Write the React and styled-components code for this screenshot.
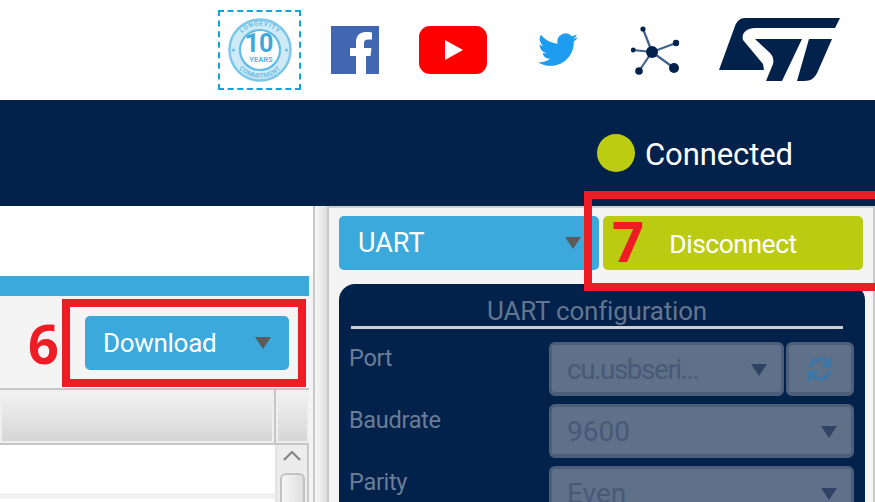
import React from "react";
import styled, { createGlobalStyle } from "styled-components";
import { FaSync } from "react-icons/fa";

const Global = createGlobalStyle`
  html, body { margin: 0; padding: 0; background: #fff; overflow: hidden; }
  * { box-sizing: border-box; }
`;
const Page = styled.div`
  position: relative; width: 875px; height: 502px; overflow: hidden;
  font-family: Roboto, "Liberation Sans", sans-serif; background: #fff;
`;
const TopBar = styled.header`
  height: 100px; display: flex; align-items: center; padding-left: 218px;
`;
const Badge = styled.div`
  width: 83px; height: 80px; border: 2px dashed #0ea5d8; display: flex; align-items: center; justify-content: center;
  margin-right: 30px; margin-top: -1px;
`;
const LogoSlot = styled.div`
  display: flex; margin-left: ${p => p.$ml}px; margin-top: ${p => p.$mt || 0}px;
`;
const StatusBar = styled.div`
  height: 106px; background: #02224c; display: flex; align-items: center; padding: 0 0 0 597px; gap: 10px; color: #fff;
`;
const Dot = styled.span`
  width: 38px; height: 38px; border-radius: 50%; background: #bccc10;
`;
const StatusText = styled.span`
  font-size: 31px; line-height: 38px; letter-spacing: -0.1px; margin-top: 3px;
`;
const Main = styled.div`
  display: flex; height: 296px; background: #f4f4f4;
`;
const LeftPane = styled.div`
  width: 313px; flex: none; display: flex; flex-direction: column;
`;
const WhiteBand = styled.div` height: 70px; background: #fff; `;
const BlueBand = styled.div` height: 20px; width: 309px; background: #3ba9dc; `;
const ActionRow = styled.div`
  height: 92px; display: flex; align-items: flex-start; justify-content: flex-end; padding: 20px 24px 0 0;
`;
const BlueButton = styled.div`
  background: #3ba9dc; border-radius: 5px; color: #fff; display: flex; align-items: center; justify-content: space-between;
  font-size: ${p => p.$fs}px; letter-spacing: ${p => p.$ls}px; font-weight: 400;
  width: ${p => p.$w}px; height: 54px;
  padding: 0 18px 0 ${p => p.$pl}px;
`;
const Caret = styled.span`
  width: 0; height: 0; border-left: 8.5px solid transparent; border-right: 8.5px solid transparent;
  border-top: 12px solid ${p => p.$c || "#5b5b5b"};
`;
const TableHeader = styled.div`
  display: flex; width: 309px; height: 57px; border-top: 2px solid #c6c6c6; border-bottom: 2px solid #c6c6c6;
  gap: 2px; background: #c6c6c6;
`;
const HeadCell = styled.div`
  height: 53px; border: 2px solid #efefef; background: linear-gradient(#f2f2f2, #d6d6d6);
  ${p => p.$grow ? "flex: 1;" : "width: 33px;"}
`;
const TableBody = styled.div`
  flex: 1; display: flex; width: 309px; background: #fff; min-height: 0;
`;
const Rows = styled.div` flex: 1; `;
const Row = styled.div`
  height: 54px; background: #fff; border-bottom: 6px solid #f1f1f1;
`;
const ScrollTrack = styled.div`
  width: 34px; background: #ececec; border-left: 2px solid #e4e4e4; border-right: 2px solid #cacaca; display: flex; flex-direction: column; align-items: center; padding-top: 6px;
`;
const Thumb = styled.div`
  width: 25px; flex: 1; margin-top: 12px; border: 2px solid #c2c2c2; border-bottom: none; border-radius: 6px 6px 0 0; background: linear-gradient(90deg,#f6f6f6,#dedede);
`;
const Splitter = styled.div`
  width: 16px; flex: none; background: linear-gradient(90deg,#c9c9c9 0 2px,#f8f8f8 2px,#dedede 14px,#c9c9c9 14px);
`;
const RightPane = styled.div`
  flex: 1; min-width: 0; background: #f4f4f4; border-top: 2px solid #d0d0d0; border-right: 2px solid #c9c9c9; padding: 8px 0 0 10px; display: flex; flex-direction: column; gap: 14px;
`;
const ButtonRow = styled.div` display: flex; gap: 4px; `;
const GreenButton = styled.div`
  width: 260px; height: 54px; background: #bbcb12; border-radius: 5px; color: #fff; font-size: 26.5px; letter-spacing: -0.5px;
  display: flex; align-items: center; justify-content: center;
`;
const ConfigPanel = styled.div`
  flex: 1; width: 526px; background: #02224c; border-radius: 16px 16px 0 0; padding: 12px 11px 0 11px; color: #63758f;
`;
const ConfigTitle = styled.div`
  margin: 0 0 0 1px; width: 492px; font-size: 26px; line-height: 30px; text-align: center; letter-spacing: -0.2px; border-bottom: 3px solid #cfcfd3; height: 33px;
`;
const FormRow = styled.div`
  display: flex; height: 54px; margin-top: ${p => p.$mt}px; gap: 2px; margin-left: -1px;
`;
const FieldLabel = styled.div`
  width: 198px; flex: none; font-size: 23.5px; line-height: 28px; padding-top: 2px; color: #6b7d96; letter-spacing: -0.3px;
`;
const Select = styled.div`
  flex: 1; height: 54px; background: #5f7089; border-radius: 6px; border: 3px solid #4c5e7a; border-bottom-width: 4px;
  display: flex; align-items: center; justify-content: space-between; padding: 2px 14px 0 15px;
  font-size: 28px; color: #465a78; letter-spacing: ${p => p.$tight ? "-1.5px" : "0"};
`;
const RefreshButton = styled.div`
  width: 68px; height: 54px; background: #5f7089; border-radius: 6px; border: 3px solid #4c5e7a; border-bottom-width: 4px;
  display: flex; align-items: center; justify-content: center; color: #3a76a8; font-size: 24px;
`;
const Annotation = styled.div`
  position: absolute; left: ${p => p.$x}px; top: ${p => p.$y}px; width: ${p => p.$w}px; height: ${p => p.$h}px;
  border: 8px solid #ee1c25; pointer-events: none;
`;
const Numeral = styled.div`
  position: absolute; left: ${p => p.$x}px; top: ${p => p.$y}px; color: #ee1c25;
  font: bold ${p => p.$fs}px/60px "Open Sans", "Liberation Sans", sans-serif;
`;

const TenYears = () => (
  <svg width="64" height="64" viewBox="0 0 64 64">
    <defs>
      <path id="arcTop" d="M7.500 32a24.500 24.500 0 0 1 49 0" />
      <path id="arcBottom" d="M4 32a28 28 0 0 0 56 0" />
    </defs>
    <circle cx="32" cy="32" r="30.500" fill="#cfeaf7" stroke="#7cc8ea" strokeWidth="2.500" />
    <circle cx="32" cy="32" r="20" fill="#fff" stroke="#62bce5" strokeWidth="2.200" />
    <text fontFamily="Roboto, sans-serif" fontWeight="700" fontSize="6.500" fill="#6cc0e6" letterSpacing="0.6" textAnchor="middle">
      <textPath href="#arcTop" startOffset="50%">LONGEVITY</textPath>
    </text>
    <text fontFamily="Roboto, sans-serif" fontWeight="700" fontSize="6.500" fill="#6cc0e6" letterSpacing="0.3" textAnchor="middle">
      <textPath href="#arcBottom" startOffset="50%">COMMITMENT</textPath>
    </text>
    <circle cx="5.500" cy="32" r="1.600" fill="#6cc0e6" />
    <circle cx="58.500" cy="32" r="1.600" fill="#6cc0e6" />
    <text x="31" y="34" textAnchor="middle" fontFamily="Roboto, sans-serif" fontWeight="700" fontSize="25" fill="#3ba9dc">10</text>
    <text x="33" y="44" textAnchor="middle" fontFamily="Roboto, sans-serif" fontWeight="700" fontSize="7.500" fill="#55b5e2">YEARS</text>
  </svg>
);
const Facebook = () => (
  <svg width="48" height="48" viewBox="0 0 48 48">
    <rect width="48" height="48" fill="#4267b2" />
    <path d="M25 48V30h-6v-8h6v-6c0-6.500 4-10 9.700-10 2.700 0 4.800.2 6.300.4v7h-3.800c-3 0-4.200 1.400-4.200 3.600v5h7.500l-1 8H35v18z" fill="#fff" />
  </svg>
);
const YouTube = () => (
  <svg width="68" height="48" viewBox="0 0 68 48">
    <rect width="68" height="48" rx="11" fill="#ff0000" />
    <path d="M26 14v20l18-10z" fill="#fff" />
  </svg>
);
const Twitter = () => (
  <svg width="40" height="34" viewBox="0 0 24 20">
    <path fill="#1e9cf0" d="M24 2.400a9.800 9.800 0 0 1-2.800.8A4.900 4.900 0 0 0 23.300.500a9.800 9.800 0 0 1-3.100 1.200 4.900 4.900 0 0 0-8.400 4.500A14 14 0 0 1 1.700.900a4.900 4.900 0 0 0 1.500 6.600 4.900 4.900 0 0 1-2.200-.6v.1a4.900 4.900 0 0 0 3.900 4.800 4.900 4.900 0 0 1-2.200.1 4.900 4.900 0 0 0 4.600 3.400A9.900 9.900 0 0 1 0 17.300 14 14 0 0 0 7.500 19.500c9.100 0 14-7.500 14-14v-.6A10 10 0 0 0 24 2.400z" />
  </svg>
);
const Network = () => (
  <svg width="50" height="50" viewBox="0 0 50 50">
    <g stroke="#3f618d" strokeWidth="2.200">
      <line x1="21" y1="26" x2="12" y2="3" /><line x1="21" y1="26" x2="45" y2="17" />
      <line x1="21" y1="26" x2="2" y2="24" /><line x1="21" y1="26" x2="8" y2="45" /><line x1="21" y1="26" x2="43" y2="42" />
    </g>
    <g fill="#02224c">
      <circle cx="21" cy="26" r="6" /><circle cx="12" cy="3" r="2.600" /><circle cx="45" cy="17" r="3.200" />
      <circle cx="2.300" cy="24" r="2.400" /><circle cx="8" cy="45" r="3.800" /><circle cx="43" cy="42" r="5" />
    </g>
  </svg>
);
const StLogo = () => (
  <svg width="122" height="64" viewBox="0 0 122 64">
    <path fill="#02224c" d="M26 0H121L116 10H36C28 10 22 15 24 22L44 46 45 52H0L16 8C18 3 21 0 26 0Z" />
    <path fill="#02224c" d="M36 21H83L63 63H47L54 46C55 42 54 38 51 35Z" />
    <path fill="#02224c" d="M90 21H113L99 53C96 60 92 63 85 63H78Z" />
  </svg>
);

export default function App() {
  return (
    <Page>
      <Global />
      <TopBar>
        <Badge><TenYears /></Badge>
        <LogoSlot $ml={0}><Facebook /></LogoSlot>
        <LogoSlot $ml={40}><YouTube /></LogoSlot>
        <LogoSlot $ml={51}><Twitter /></LogoSlot>
        <LogoSlot $ml={53} $mt={1}><Network /></LogoSlot>
        <LogoSlot $ml={38}><StLogo /></LogoSlot>
      </TopBar>
      <StatusBar>
        <Dot />
        <StatusText>Connected</StatusText>
      </StatusBar>
      <Main>
        <LeftPane>
          <WhiteBand />
          <BlueBand />
          <ActionRow>
            <BlueButton $w={204} $fs={26} $ls={-0.3} $pl={18}>Download<Caret /></BlueButton>
          </ActionRow>
          <TableHeader>
            <HeadCell $grow />
            <HeadCell />
          </TableHeader>
          <TableBody>
            <Rows><Row /></Rows>
            <ScrollTrack>
              <svg width="18" height="10" viewBox="0 0 18 10" fill="none" stroke="#858585" strokeWidth="2.200"><path d="M1 9L9 1l8 8" /></svg>
              <Thumb />
            </ScrollTrack>
          </TableBody>
        </LeftPane>
        <Splitter />
        <RightPane>
          <ButtonRow>
            <BlueButton $w={260} $fs={27} $ls={0} $pl={19}>UART<Caret /></BlueButton>
            <GreenButton>Disconnect</GreenButton>
          </ButtonRow>
          <ConfigPanel>
            <ConfigTitle>UART configuration</ConfigTitle>
            <FormRow $mt={13}>
              <FieldLabel>Port</FieldLabel>
              <Select $tight>cu.usbseri...<Caret $c="#2f4364" /></Select>
              <RefreshButton><FaSync /></RefreshButton>
            </FormRow>
            <FormRow $mt={8}>
              <FieldLabel>Baudrate</FieldLabel>
              <Select>9600<Caret $c="#2f4364" /></Select>
            </FormRow>
            <FormRow $mt={8}>
              <FieldLabel>Parity</FieldLabel>
              <Select>Even<Caret $c="#2f4364" /></Select>
            </FormRow>
          </ConfigPanel>
        </RightPane>
      </Main>
      <Annotation $x={62} $y={299} $w={244} $h={88} />
      <Annotation $x={584} $y={191} $w={300} $h={100} />
      <Numeral $x={28} $y={313} $fs={54}>6</Numeral>
      <Numeral $x={612} $y={210} $fs={56}>7</Numeral>
    </Page>
  );
}
